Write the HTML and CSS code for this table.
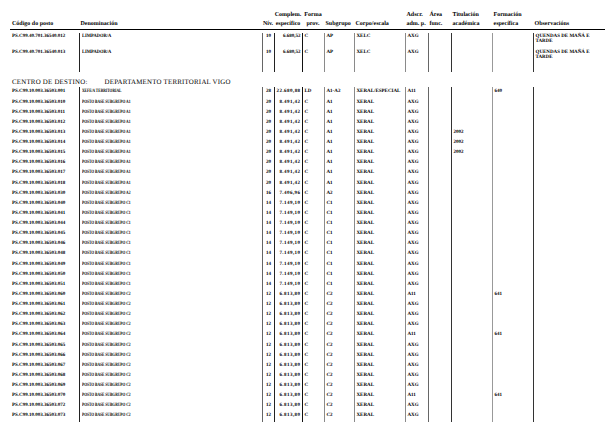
FILE: index.html
```html
<!DOCTYPE html>
<html lang="gl">
<head>
<meta charset="utf-8">
<title>Relación de postos</title>
<link rel="stylesheet" href="styles.css">
</head>
<body>
<div class="page">
  <div class="row head">
    <div class="h-code">Código do posto</div>
    <div>Denominación</div>
    <div class="ctr">Nív.</div>
    <div class="ctr"><span>Complem.</span><span>específico</span></div>
    <div class="ctr"><span>Forma</span><span>prov.</span></div>
    <div>Subgrupo</div>
    <div>Corpo/escala</div>
    <div><span>Adscr.</span><span>adm. p.</span></div>
    <div><span>Área</span><span>func.</span></div>
    <div><span>Titulación</span><span>académica</span></div>
    <div><span>Formación</span><span>específica</span></div>
    <div>Observacións</div>
  </div>

  <div class="tbl t1">
    <div class="row r1"><div>PS.C99.40.701.36540.012</div><div class="den"><span>LIMPADOR/A</span></div><div class="n">10</div><div class="m">6.680,52</div><div>C</div><div>AP</div><div>XELC</div><div>AXG</div><div></div><div></div><div></div><div class="obs">QUENDAS DE MAÑÁ E<br>TARDE</div></div>
    <div class="row r2"><div>PS.C99.40.701.36540.013</div><div class="den"><span>LIMPADOR/A</span></div><div class="n">10</div><div class="m">6.680,52</div><div>C</div><div>AP</div><div>XELC</div><div>AXG</div><div></div><div></div><div></div><div class="obs">QUENDAS DE MAÑÁ E<br>TARDE</div></div>
  </div>

  <div class="title"><span>CENTRO DE DESTINO:</span><span>DEPARTAMENTO TERRITORIAL VIGO</span></div>

  <div class="tbl t2">
    <div class="row"><div>PS.C99.10.003.36503.001</div><div class="den"><span>XEFE/A TERRITORIAL</span></div><div class="n">28</div><div class="m">22.680,88</div><div>LD</div><div>A1-A2</div><div>XERAL/ESPECIAL</div><div>A11</div><div></div><div></div><div>640</div><div></div></div>
    <div class="row"><div>PS.C99.10.003.36503.010</div><div class="den"><span>POSTO BASE SUBGRUPO A1</span></div><div class="n">20</div><div class="m">8.491,42</div><div>C</div><div>A1</div><div>XERAL</div><div>AXG</div><div></div><div></div><div></div><div></div></div>
    <div class="row"><div>PS.C99.10.003.36503.011</div><div class="den"><span>POSTO BASE SUBGRUPO A1</span></div><div class="n">20</div><div class="m">8.491,42</div><div>C</div><div>A1</div><div>XERAL</div><div>AXG</div><div></div><div></div><div></div><div></div></div>
    <div class="row"><div>PS.C99.10.003.36503.012</div><div class="den"><span>POSTO BASE SUBGRUPO A1</span></div><div class="n">20</div><div class="m">8.491,42</div><div>C</div><div>A1</div><div>XERAL</div><div>AXG</div><div></div><div></div><div></div><div></div></div>
    <div class="row"><div>PS.C99.10.003.36503.013</div><div class="den"><span>POSTO BASE SUBGRUPO A1</span></div><div class="n">20</div><div class="m">8.491,42</div><div>C</div><div>A1</div><div>XERAL</div><div>AXG</div><div></div><div>2002</div><div></div><div></div></div>
    <div class="row"><div>PS.C99.10.003.36503.014</div><div class="den"><span>POSTO BASE SUBGRUPO A1</span></div><div class="n">20</div><div class="m">8.491,42</div><div>C</div><div>A1</div><div>XERAL</div><div>AXG</div><div></div><div>2002</div><div></div><div></div></div>
    <div class="row"><div>PS.C99.10.003.36503.015</div><div class="den"><span>POSTO BASE SUBGRUPO A1</span></div><div class="n">20</div><div class="m">8.491,42</div><div>C</div><div>A1</div><div>XERAL</div><div>AXG</div><div></div><div>2002</div><div></div><div></div></div>
    <div class="row"><div>PS.C99.10.003.36503.016</div><div class="den"><span>POSTO BASE SUBGRUPO A1</span></div><div class="n">20</div><div class="m">8.491,42</div><div>C</div><div>A1</div><div>XERAL</div><div>AXG</div><div></div><div></div><div></div><div></div></div>
    <div class="row"><div>PS.C99.10.003.36503.017</div><div class="den"><span>POSTO BASE SUBGRUPO A1</span></div><div class="n">20</div><div class="m">8.491,42</div><div>C</div><div>A1</div><div>XERAL</div><div>AXG</div><div></div><div></div><div></div><div></div></div>
    <div class="row"><div>PS.C99.10.003.36503.018</div><div class="den"><span>POSTO BASE SUBGRUPO A1</span></div><div class="n">20</div><div class="m">8.491,42</div><div>C</div><div>A1</div><div>XERAL</div><div>AXG</div><div></div><div></div><div></div><div></div></div>
    <div class="row"><div>PS.C99.10.003.36503.030</div><div class="den"><span>POSTO BASE SUBGRUPO A2</span></div><div class="n">16</div><div class="m">7.406,96</div><div>C</div><div>A2</div><div>XERAL</div><div>AXG</div><div></div><div></div><div></div><div></div></div>
    <div class="row"><div>PS.C99.10.003.36503.040</div><div class="den"><span>POSTO BASE SUBGRUPO C1</span></div><div class="n">14</div><div class="m">7.149,10</div><div>C</div><div>C1</div><div>XERAL</div><div>AXG</div><div></div><div></div><div></div><div></div></div>
    <div class="row"><div>PS.C99.10.003.36503.041</div><div class="den"><span>POSTO BASE SUBGRUPO C1</span></div><div class="n">14</div><div class="m">7.149,10</div><div>C</div><div>C1</div><div>XERAL</div><div>AXG</div><div></div><div></div><div></div><div></div></div>
    <div class="row"><div>PS.C99.10.003.36503.044</div><div class="den"><span>POSTO BASE SUBGRUPO C1</span></div><div class="n">14</div><div class="m">7.149,10</div><div>C</div><div>C1</div><div>XERAL</div><div>AXG</div><div></div><div></div><div></div><div></div></div>
    <div class="row"><div>PS.C99.10.003.36503.045</div><div class="den"><span>POSTO BASE SUBGRUPO C1</span></div><div class="n">14</div><div class="m">7.149,10</div><div>C</div><div>C1</div><div>XERAL</div><div>AXG</div><div></div><div></div><div></div><div></div></div>
    <div class="row"><div>PS.C99.10.003.36503.046</div><div class="den"><span>POSTO BASE SUBGRUPO C1</span></div><div class="n">14</div><div class="m">7.149,10</div><div>C</div><div>C1</div><div>XERAL</div><div>AXG</div><div></div><div></div><div></div><div></div></div>
    <div class="row"><div>PS.C99.10.003.36503.048</div><div class="den"><span>POSTO BASE SUBGRUPO C1</span></div><div class="n">14</div><div class="m">7.149,10</div><div>C</div><div>C1</div><div>XERAL</div><div>AXG</div><div></div><div></div><div></div><div></div></div>
    <div class="row"><div>PS.C99.10.003.36503.049</div><div class="den"><span>POSTO BASE SUBGRUPO C1</span></div><div class="n">14</div><div class="m">7.149,10</div><div>C</div><div>C1</div><div>XERAL</div><div>AXG</div><div></div><div></div><div></div><div></div></div>
    <div class="row"><div>PS.C99.10.003.36503.050</div><div class="den"><span>POSTO BASE SUBGRUPO C1</span></div><div class="n">14</div><div class="m">7.149,10</div><div>C</div><div>C1</div><div>XERAL</div><div>AXG</div><div></div><div></div><div></div><div></div></div>
    <div class="row"><div>PS.C99.10.003.36503.051</div><div class="den"><span>POSTO BASE SUBGRUPO C1</span></div><div class="n">14</div><div class="m">7.149,10</div><div>C</div><div>C1</div><div>XERAL</div><div>AXG</div><div></div><div></div><div></div><div></div></div>
    <div class="row"><div>PS.C99.10.003.36503.060</div><div class="den"><span>POSTO BASE SUBGRUPO C2</span></div><div class="n">12</div><div class="m">6.813,80</div><div>C</div><div>C2</div><div>XERAL</div><div>A11</div><div></div><div></div><div>641</div><div></div></div>
    <div class="row"><div>PS.C99.10.003.36503.061</div><div class="den"><span>POSTO BASE SUBGRUPO C2</span></div><div class="n">12</div><div class="m">6.813,80</div><div>C</div><div>C2</div><div>XERAL</div><div>AXG</div><div></div><div></div><div></div><div></div></div>
    <div class="row"><div>PS.C99.10.003.36503.062</div><div class="den"><span>POSTO BASE SUBGRUPO C2</span></div><div class="n">12</div><div class="m">6.813,80</div><div>C</div><div>C2</div><div>XERAL</div><div>AXG</div><div></div><div></div><div></div><div></div></div>
    <div class="row"><div>PS.C99.10.003.36503.063</div><div class="den"><span>POSTO BASE SUBGRUPO C2</span></div><div class="n">12</div><div class="m">6.813,80</div><div>C</div><div>C2</div><div>XERAL</div><div>AXG</div><div></div><div></div><div></div><div></div></div>
    <div class="row"><div>PS.C99.10.003.36503.064</div><div class="den"><span>POSTO BASE SUBGRUPO C2</span></div><div class="n">12</div><div class="m">6.813,80</div><div>C</div><div>C2</div><div>XERAL</div><div>A11</div><div></div><div></div><div>641</div><div></div></div>
    <div class="row"><div>PS.C99.10.003.36503.065</div><div class="den"><span>POSTO BASE SUBGRUPO C2</span></div><div class="n">12</div><div class="m">6.813,80</div><div>C</div><div>C2</div><div>XERAL</div><div>AXG</div><div></div><div></div><div></div><div></div></div>
    <div class="row"><div>PS.C99.10.003.36503.066</div><div class="den"><span>POSTO BASE SUBGRUPO C2</span></div><div class="n">12</div><div class="m">6.813,80</div><div>C</div><div>C2</div><div>XERAL</div><div>AXG</div><div></div><div></div><div></div><div></div></div>
    <div class="row"><div>PS.C99.10.003.36503.067</div><div class="den"><span>POSTO BASE SUBGRUPO C2</span></div><div class="n">12</div><div class="m">6.813,80</div><div>C</div><div>C2</div><div>XERAL</div><div>AXG</div><div></div><div></div><div></div><div></div></div>
    <div class="row"><div>PS.C99.10.003.36503.068</div><div class="den"><span>POSTO BASE SUBGRUPO C2</span></div><div class="n">12</div><div class="m">6.813,80</div><div>C</div><div>C2</div><div>XERAL</div><div>AXG</div><div></div><div></div><div></div><div></div></div>
    <div class="row"><div>PS.C99.10.003.36503.069</div><div class="den"><span>POSTO BASE SUBGRUPO C2</span></div><div class="n">12</div><div class="m">6.813,80</div><div>C</div><div>C2</div><div>XERAL</div><div>AXG</div><div></div><div></div><div></div><div></div></div>
    <div class="row"><div>PS.C99.10.003.36503.070</div><div class="den"><span>POSTO BASE SUBGRUPO C2</span></div><div class="n">12</div><div class="m">6.813,80</div><div>C</div><div>C2</div><div>XERAL</div><div>A11</div><div></div><div></div><div>641</div><div></div></div>
    <div class="row"><div>PS.C99.10.003.36503.072</div><div class="den"><span>POSTO BASE SUBGRUPO C2</span></div><div class="n">12</div><div class="m">6.813,80</div><div>C</div><div>C2</div><div>XERAL</div><div>AXG</div><div></div><div></div><div></div><div></div></div>
    <div class="row"><div>PS.C99.10.003.36503.073</div><div class="den"><span>POSTO BASE SUBGRUPO C2</span></div><div class="n">12</div><div class="m">6.813,80</div><div>C</div><div>C2</div><div>XERAL</div><div>AXG</div><div></div><div></div><div></div><div></div></div>
  </div>
</div>
</body>
</html>
```

FILE: styles.css
```css
* { box-sizing: border-box; margin: 0; padding: 0; }
html, body { background: #fff; }
body {
  margin: 0;
  font-family: "Liberation Serif", "Times New Roman", serif;
  font-weight: bold;
  color: #000;
  text-rendering: geometricPrecision;
}
.page {
  width: 615px;
  padding: 11px 10px 0 10px;
}
.row {
  display: grid;
  grid-template-columns: 69px 183px 12px 28px 22px 30px 51px 23px 23px 41px 41px 72px;
  width: 595px;
}

/* header */
.head {
  height: 18.6px;
  border-bottom: 1px solid #000;
  font-size: 6px;
  line-height: 8.8px;
}
.head > div {
  display: flex;
  flex-direction: column;
  justify-content: flex-end;
  padding-left: 1.5px;
  white-space: nowrap;
}
.head > .h-code { padding-left: 2px; }
.head > .ctr { align-items: center; padding-left: 0; }

/* tables */
.tbl { font-size: 5px; }
.tbl .row > div {
  padding: 0 1.5px;
  white-space: nowrap;
}
.tbl .row > div:nth-child(1) { padding-left: 2px; }
.tbl .row > div:nth-child(n+2) { border-left: 1px solid #333; }
.tbl .row > div:nth-child(2) { border-left-color: #222; }
.tbl .row > div:nth-child(3) { border-left-color: #666; }
.tbl .row > div:nth-child(4) { border-left-color: #222; }
.tbl .row > div:nth-child(5) { border-left-color: #111; }
.tbl .row > div:nth-child(6) { border-left-color: #8a8a8a; }
.tbl .row > div:nth-child(7) { border-left-color: #8a8a8a; }
.tbl .row > div:nth-child(8) { border-left-color: #8a8a8a; }
.tbl .row > div:nth-child(9) { border-left-color: #666; }
.tbl .row > div:nth-child(10) { border-left-color: #333; }
.tbl .row > div:nth-child(11) { border-left-color: #999; }
.tbl .row > div:nth-child(12) { border-left-color: #333; }

.tbl .den > span {
  display: inline-block;
  transform: scaleX(0.72);
  transform-origin: left center;
}
.t1 .den > span { transform: scaleX(0.9); }
.tbl .n { text-align: center; padding: 0; }
.tbl .m { text-align: right; padding-right: 1px; }
.t2 .m { letter-spacing: 0.45px; }

.t1 { margin-top: 3.4px; line-height: 4.8px; }
.t1 .row > div { padding-top: 2.3px; }
.t1 .r1 { height: 16px; }
.t1 .r2 { height: 23px; }

.title {
  display: flex;
  gap: 17px;
  margin-top: 5.8px;
  padding-left: 2px;
  font-weight: normal;
  font-size: 6.9px;
  letter-spacing: 0.22px;
  line-height: 9px;
  color: #000;
}

.t2 { margin-top: 0.6px; line-height: 10.13px; }
.t2 .row { height: 10.13px; }
```
